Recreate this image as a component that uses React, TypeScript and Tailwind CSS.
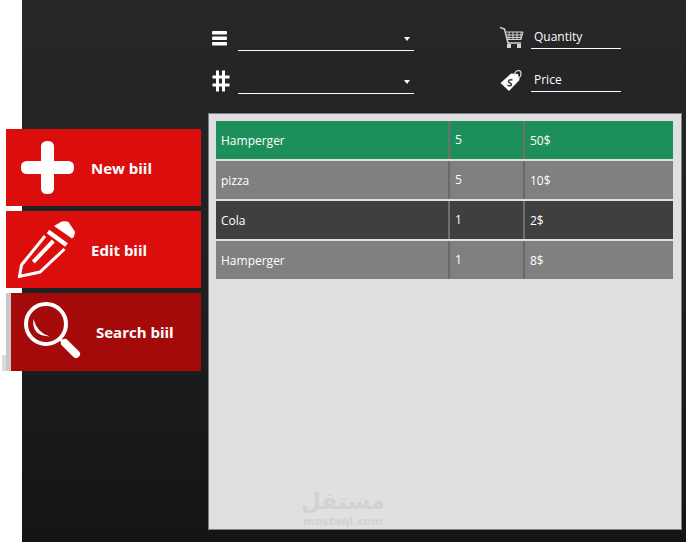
import React from 'react';

const rows = [
  { name: 'Hamperger', qty: '5', price: '50$', color: 'bg-[#1d8f5b]', sep: 'bg-[#6f6f6f]' },
  { name: 'pizza', qty: '5', price: '10$', color: 'bg-[#808080]', sep: 'bg-[#6a6a6a]' },
  { name: 'Cola', qty: '1', price: '2$', color: 'bg-[#3f3f3f]', sep: 'bg-[#6f6f6f]' },
  { name: 'Hamperger', qty: '1', price: '8$', color: 'bg-[#808080]', sep: 'bg-[#6a6a6a]' },
];

function PlusIcon() {
  return (
    <svg width="53" height="53" viewBox="0 0 53 53" fill="#fff">
      <rect x="20" y="0" width="13" height="53" rx="5.5" />
      <rect x="0" y="20" width="53" height="13" rx="5.5" />
    </svg>
  );
}

function PencilIcon() {
  return (
    <svg width="58" height="58" viewBox="0 0 58 58" fill="none" stroke="#fff">
      <path d="M36 5 L43.700 0.500 Q47 0 50.300 0.700 L57 10.700 L56 15.700 L54 17.500 Z" fill="#fff" stroke="none" />
      <path d="M30 10.500 L48.500 24" strokeWidth="4.500" />
      <path d="M27 15 L3.500 44 L1.500 55.500 L22 51 L46.500 28" strokeWidth="3" />
      <path d="M35.300 20 L15.300 41" strokeWidth="4" />
    </svg>
  );
}

function SearchIcon() {
  return (
    <svg width="60" height="60" viewBox="0 0 60 60" fill="none" stroke="#fff">
      <circle cx="22" cy="22" r="20" strokeWidth="4" />
      <path d="M36 37 L43 44" strokeWidth="3" />
      <path d="M41 41 L52 52" strokeWidth="8" strokeLinecap="round" />
      <path d="M9.500 17 Q7 34 26 34.500 Q13 31 9.500 17 Z" fill="#fff" stroke="none" />
    </svg>
  );
}

function ListIcon() {
  return (
    <svg width="16" height="15" viewBox="0 0 16 15" fill="#fff">
      <rect x="0" y="0" width="15" height="3.500" rx="1" />
      <rect x="0" y="5.500" width="15" height="3.500" rx="1" />
      <rect x="0" y="11" width="15" height="3.500" rx="1" />
    </svg>
  );
}

function HashIcon() {
  return (
    <svg width="18" height="22" viewBox="0 0 18 22" fill="none" stroke="#fff" strokeWidth="3">
      <path d="M5.500 0.500 V21.500 M11.500 0.500 V21.500 M0.500 7 H17.500 M0.500 15 H17.500" />
    </svg>
  );
}

function CartIcon() {
  return (
    <svg width="24" height="22" viewBox="0 0 24 22" fill="none" stroke="#d4d4d4" strokeWidth="1">
      <path d="M0 0.500 L4.500 2 L8 16 H21" strokeWidth="1.500" />
      <path d="M6 5 H23 L21 12.500 H7 M9 5 V12.500 M13 5 V12.500 M17 5 V12.500 M21 5 V12.500 M6 8 H22.500 M7 10.500 H22" />
      <rect x="7" y="17" width="4" height="4" fill="#d4d4d4" stroke="none" />
      <rect x="17" y="17" width="4" height="4" fill="#d4d4d4" stroke="none" />
    </svg>
  );
}

function TagIcon() {
  return (
    <svg width="22" height="22" viewBox="0 0 22 22">
      <path d="M0.500 13 L11 3.500 L18 4 L19.500 10 L9 21 Z" fill="#fff" />
      <path d="M14 6 Q15 0.500 19 0.500 Q22 1.500 20.500 6 L18.500 9" fill="none" stroke="#ddd" strokeWidth="1.200" />
      <path d="M12.500 10 Q9 9 8.500 11.500 Q9 13 10.500 13 Q12 14 11 15.500 Q9 16.500 7.500 15" fill="none" stroke="#333" strokeWidth="1.400" />
    </svg>
  );
}

function Combo({ icon }: { icon: React.ReactNode }) {
  return (
    <div className="flex items-center h-[30px]">
      <div className="w-[30px] flex justify-start pl-[4px]">{icon}</div>
      <div className="w-[176px] h-[28px] self-start border-b border-white flex items-center justify-end pr-[4px]">
        <span className="w-0 h-0 border-x-[3.500px] border-x-transparent border-t-[4px] border-t-white mt-[4px]" />
      </div>
    </div>
  );
}

function Field({ icon, label }: { icon: React.ReactNode; label: string }) {
  return (
    <div className="flex items-center h-[30px]">
      <div className="w-[32px] pl-[1px]">{icon}</div>
      <div className="w-[90px] h-[26px] self-start border-b border-white flex items-center pl-[3px] pt-[3px] text-[12px] text-white">
        {label}
      </div>
    </div>
  );
}

function SideButton({
  icon,
  label,
  className,
  labelClass,
}: {
  icon: React.ReactNode;
  label: string;
  className: string;
  labelClass: string;
}) {
  return (
    <div className={`flex items-center h-[77px] text-white font-bold text-[15px] ${className}`}>
      {icon}
      <span className={`mt-[1px] ${labelClass}`}>{label}</span>
    </div>
  );
}

export default function App() {
  return (
    <div className="w-[686px] h-[542px] bg-white pl-[22px] overflow-hidden font-['Segoe_UI','Open_Sans','Noto_Sans',sans-serif]">
      <div className="h-full flex bg-gradient-to-b from-[#262728] via-[#1f2021] to-[#131415]">
        <div className="w-[195px] -ml-[16px] pt-[129px] flex flex-col shrink-0">
          <SideButton
            className="bg-[#dc0d0d] pl-[15px]"
            icon={<PlusIcon />}
            label="New biil"
            labelClass="ml-[17px]"
          />
          <SideButton
            className="bg-[#dc0d0d] pl-[12px] mt-[5px]"
            icon={<PencilIcon />}
            label="Edit biil"
            labelClass="ml-[15px]"
          />
          <div className="relative mt-[5px] flex h-[78px]">
            <div className="w-[5px] bg-[#c8c8c8]" />
            <div className="absolute -left-[4px] bottom-0 w-[4px] h-[16px] bg-[#dcdcdc]" />
            <SideButton
              className="flex-1 !h-[78px] bg-[#a50a0a] pl-[13px]"
              icon={<SearchIcon />}
              label="Search biil"
              labelClass="ml-[12px]"
            />
          </div>
        </div>

        <div className="ml-[7px] w-[474px] flex flex-col">
          <div className="h-[113px] pt-[23px] flex">
            <div className="flex flex-col gap-[13px] w-[291px]">
              <Combo icon={<ListIcon />} />
              <Combo icon={<HashIcon />} />
            </div>
            <div className="flex flex-col gap-[13px]">
              <Field icon={<CartIcon />} label="Quantity" />
              <Field icon={<TagIcon />} label="Price" />
            </div>
          </div>

          <div className="relative h-[417px] border border-[#7a8088] bg-[#e0e0e0] pt-[7px] pl-[7px]">
            <div className="flex flex-col gap-[2px] w-[457px]">
              {rows.map((row, i) => (
                <div key={i} className={`flex h-[38px] text-[12px] text-white ${row.color}`}>
                  <div className="w-[232px] flex items-center pl-[5px] pt-[2px]">{row.name}</div>
                  <div className={`w-[2px] ${row.sep}`} />
                  <div className="w-[73px] flex items-center pl-[5px]">{row.qty}</div>
                  <div className={`w-[2px] ${row.sep}`} />
                  <div className="flex-1 flex items-center pl-[5px] pt-[2px]">{row.price}</div>
                </div>
              ))}
            </div>
            <div className="absolute left-[92px] bottom-0 w-[84px] flex flex-col items-center text-[#d2d2d2]">
              <div className="font-['DejaVu_Sans',sans-serif] font-bold text-[23px] leading-[27px]">مستقل</div>
              <div className="font-['DejaVu_Sans',sans-serif] font-bold text-[11px] leading-[14px] whitespace-nowrap">mostaql.com</div>
            </div>
          </div>
        </div>
      </div>
    </div>
  );
}
